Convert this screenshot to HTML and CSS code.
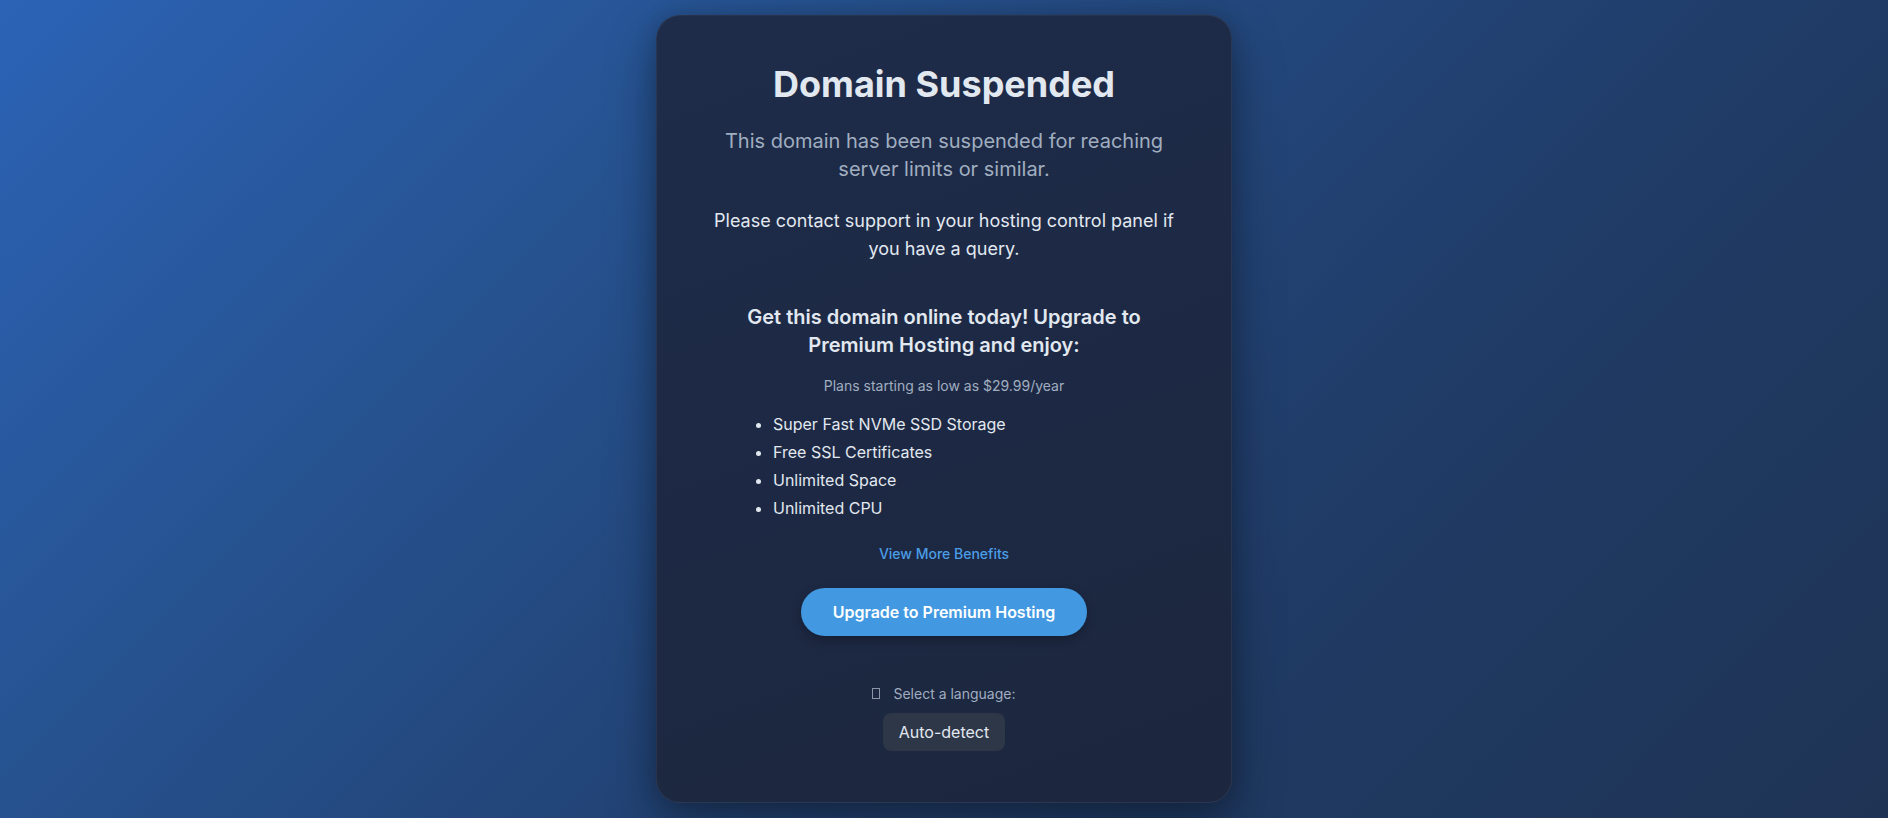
FILE: index.html
```html
<!DOCTYPE html>
<html lang="en">
<head>
<meta charset="utf-8">
<title>Domain Suspended</title>
<link rel="stylesheet" href="styles.css">
</head>
<body>
<main class="page">
  <div class="card">
    <h1 class="title">Domain Suspended</h1>
    <p class="lead">This domain has been suspended for reaching server limits or similar.</p>
    <p class="contact">Please contact support in your hosting control panel if you have a query.</p>
    <section class="promo">
      <h2 class="promo-title">Get this domain online today! Upgrade to Premium Hosting and enjoy:</h2>
      <p class="price">Plans starting as low as $29.99/year</p>
      <ul class="features">
        <li>Super Fast NVMe SSD Storage</li>
        <li>Free SSL Certificates</li>
        <li>Unlimited Space</li>
        <li>Unlimited CPU</li>
      </ul>
      <a class="more" href="#">View More Benefits</a>
      <a class="upgrade" href="#">Upgrade to Premium Hosting</a>
    </section>
    <div class="lang">
      <label class="lang-label"><span class="tofu"></span>Select a language:</label>
      <div class="select">Auto-detect</div>
    </div>
  </div>
</main>
</body>
</html>
```
FILE: styles.css
```css
* { box-sizing: border-box; }
html, body { margin: 0; padding: 0; height: 100%; }
body {
  font-family: Inter, "Noto Sans", "Liberation Sans", sans-serif;
  background: linear-gradient(135deg, #2c63b6 0%, #26528f 30%, #213f6e 60%, #1f3a63 72%, #1f3455 100%);
  color: #e2e8f0;
}
.page {
  min-height: 100%;
  display: flex;
  align-items: center;
  justify-content: center;
}
.card {
  width: 576px;
  padding: 48px 48px 51px;
  border-radius: 24px;
  background: linear-gradient(160deg, #1e2c4a 0%, #1d2944 50%, #1c263e 100%);
  border: 1px solid rgba(255,255,255,0.06);
  box-shadow: 0 20px 50px rgba(0,0,0,0.35), 0 0 20px rgba(0,0,0,0.15);
  text-align: center;
  display: flex;
  flex-direction: column;
  align-items: center;
}
.title {
  margin: 0 0 23px;
  font-size: 36px;
  line-height: 40px;
  font-weight: 700;
  color: #e2e8f0;
}
.lead {
  margin: 0 0 24px;
  font-size: 20px;
  line-height: 28px;
  color: #a0aec0;
}
.contact {
  margin: 0 0 40px;
  font-size: 18px;
  line-height: 28px;
  color: #e2e8f0;
}
.promo {
  width: 400px;
  display: flex;
  flex-direction: column;
  align-items: center;
}
.promo-title {
  margin: 0 0 17px;
  font-size: 20px;
  line-height: 28px;
  font-weight: 600;
  color: #e2e8f0;
}
.price {
  margin: 0 0 16px;
  font-size: 14px;
  line-height: 20px;
  color: #a0aec0;
}
.features {
  align-self: stretch;
  margin: 0 0 24px;
  padding: 0 0 0 29px;
  text-align: left;
  font-size: 16px;
  line-height: 24px;
  color: #e2e8f0;
}
.features li { margin-bottom: 3.7px; }
.features li:last-child { margin-bottom: 0; }
.more {
  font-size: 14px;
  line-height: 20px;
  font-weight: 500;
  color: #4a9de6;
  text-decoration: none;
  margin-bottom: 24px;
}
.upgrade {
  display: inline-block;
  padding: 12px 32px;
  border-radius: 999px;
  background: #4299e1;
  color: #ffffff;
  font-size: 16px;
  line-height: 24px;
  font-weight: 600;
  text-decoration: none;
  box-shadow: 0 4px 10px rgba(0,0,0,0.25);
}
.lang {
  margin-top: 48px;
  display: flex;
  flex-direction: column;
  align-items: center;
  gap: 9px;
}
.lang-label {
  font-size: 14px;
  line-height: 20px;
  color: #a0aec0;
  display: flex;
  align-items: center;
}
.tofu {
  display: inline-block;
  width: 8px;
  height: 11px;
  border: 1px solid #8a96a8;
  margin-right: 13px;
}
.select {
  padding: 7px 16px;
  border-radius: 8px;
  background: #2d3748;
  color: #e2e8f0;
  font-size: 16px;
  line-height: 24px;
}
```
